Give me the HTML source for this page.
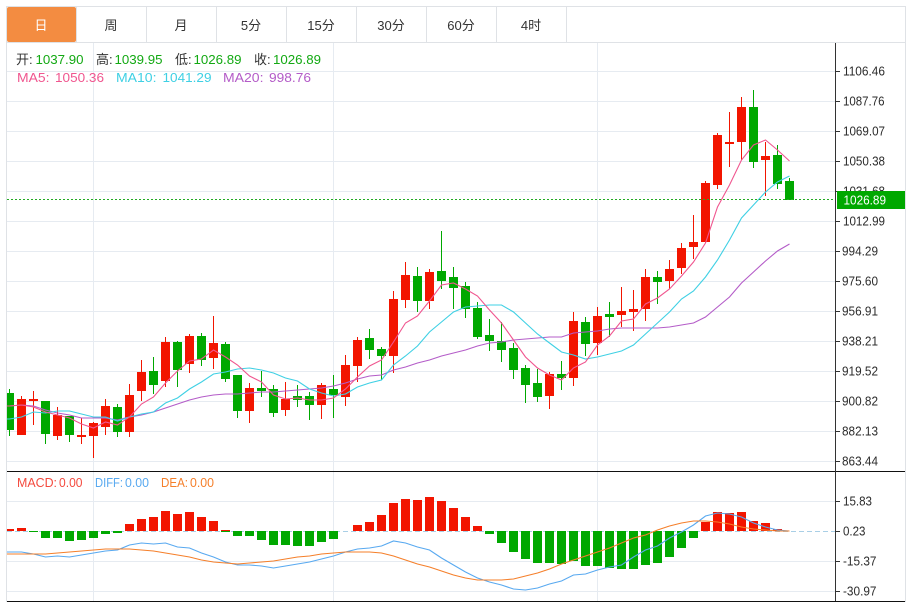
<!DOCTYPE html>
<html lang="zh">
<head>
<meta charset="utf-8">
<title>K线图</title>
<style>
html,body{margin:0;padding:0;background:#fff;width:912px;height:602px;overflow:hidden}
svg{display:block;font-family:"Liberation Sans","Noto Sans CJK SC",sans-serif}
.ax{font-size:12.5px;fill:#2b2b2b}
.hd{font-size:13px}
.tb{font-size:13px;fill:#333;text-anchor:middle}
.c{shape-rendering:crispEdges}
.l{fill:none;stroke-width:1.1}
</style>
</head>
<body>
<svg width="912" height="602" viewBox="0 0 912 602" xmlns="http://www.w3.org/2000/svg">
<!-- grid -->
<path class="c" fill="none" stroke="#e6ebf1" d="M7 71.5H835M7 101.5H835M7 131.5H835M7 161.5H835M7 191.5H835M7 221.5H835M7 251.5H835M7 281.5H835M7 311.5H835M7 341.5H835M7 371.5H835M7 401.5H835M7 431.5H835M7 461.5H835M7 501.5H835M7 561.5H835M7 591.5H835M93.5 43V601M333.5 43V601M597.5 43V601"/>
<!-- frame -->
<path class="c" fill="none" stroke="#dfe2e6" d="M6.5 6V602M6 6.5H906M905.5 6V602M6 42.5H906M146.5 7V42M216.5 7V42M286.5 7V42M356.5 7V42M426.5 7V42M496.5 7V42M566.5 7V42"/>
<rect x="7" y="7" width="69" height="35" rx="2" fill="#f38c41"/>
<path class="c" fill="none" stroke="#dfe2e6" d="M76.5 7V42"/>
<text class="tb" x="41" y="30" style="fill:#fff">日</text>
<text class="tb" x="111" y="30">周</text>
<text class="tb" x="181" y="30">月</text>
<text class="tb" x="251" y="30">5分</text>
<text class="tb" x="321" y="30">15分</text>
<text class="tb" x="391" y="30">30分</text>
<text class="tb" x="461" y="30">60分</text>
<text class="tb" x="531" y="30">4时</text>
<!-- wicks -->
<path class="c" fill="none" stroke="#f21500" d="M21.5 396V435M33.5 391V425M57.5 407V440M81.5 418V444M93.5 422V458M105.5 399V435M129.5 384V437M141.5 360V401M165.5 337V387M189.5 334V373M213.5 316V369M249.5 383V423M285.5 382V416M321.5 383V419M345.5 355V406M357.5 337V382M393.5 291V373M405.5 262V308M429.5 269V309M549.5 372V409M573.5 312V386M597.5 307V355M621.5 287V327M633.5 290V331M645.5 269V321M669.5 260V289M681.5 243V274M693.5 215V259M705.5 181V243M717.5 133V189M729.5 112V167M741.5 97V160M765.5 142V196"/>
<path class="c" fill="none" stroke="#00a800" d="M9.5 389V436M45.5 401V444M69.5 416V442M117.5 404V437M153.5 357V394M177.5 341V387M201.5 333V366M225.5 342V382M237.5 375V418M261.5 371V397M273.5 385V417M297.5 385V407M309.5 392V420M333.5 375V418M369.5 329V359M381.5 347V380M417.5 267V312M441.5 231V289M453.5 267V309M465.5 282V318M477.5 302V339M489.5 319V351M501.5 322V362M513.5 343V379M525.5 365V403M537.5 369V402M561.5 361V390M585.5 317V356M609.5 302V337M657.5 271V304M753.5 90V168M777.5 145V189M789.5 178V200"/>
<!-- bodies -->
<path class="c" fill="#f21500" d="M17 399h9v36h-9zM29 399h9v2h-9zM53 415h9v21h-9zM77 435h9v2h-9zM89 423h9v13h-9zM101 406h9v21h-9zM125 395h9v37h-9zM137 372h9v19h-9zM161 342h9v39h-9zM185 336h9v28h-9zM209 343h9v15h-9zM245 388h9v23h-9zM281 399h9v11h-9zM317 385h9v20h-9zM341 365h9v32h-9zM353 340h9v26h-9zM389 299h9v57h-9zM401 275h9v25h-9zM425 272h9v29h-9zM545 374h9v22h-9zM569 321h9v57h-9zM593 316h9v27h-9zM617 311h9v4h-9zM629 309h9v3h-9zM641 277h9v32h-9zM665 269h9v12h-9zM677 248h9v20h-9zM689 242h9v5h-9zM701 183h9v59h-9zM713 135h9v50h-9zM725 142h9v2h-9zM737 107h9v35h-9zM761 156h9v4h-9z"/>
<path class="c" fill="#00a800" d="M7 393h7v37h-7zM41 401h9v33h-9zM65 416h9v19h-9zM113 407h9v25h-9zM149 371h9v14h-9zM173 342h9v28h-9zM197 336h9v24h-9zM221 344h9v35h-9zM233 375h9v36h-9zM257 388h9v3h-9zM269 389h9v24h-9zM293 396h9v4h-9zM305 396h9v9h-9zM329 389h9v6h-9zM365 338h9v12h-9zM377 349h9v7h-9zM413 276h9v25h-9zM437 271h9v10h-9zM449 277h9v11h-9zM461 286h9v23h-9zM473 308h9v29h-9zM485 335h9v6h-9zM497 341h9v9h-9zM509 348h9v22h-9zM521 368h9v17h-9zM533 383h9v14h-9zM557 374h9v4h-9zM581 322h9v22h-9zM605 314h9v3h-9zM653 277h9v5h-9zM749 107h9v55h-9zM773 155h9v29h-9zM785 181h9v19h-9z"/>
<!-- MA lines -->
<polyline class="l" stroke="#b45cc8" points="7,406 9.5,406 21.5,405 33.5,406 45.5,410 57.5,413 69.5,415 81.5,418 93.5,418 105.5,418 117.5,420 129.5,417 141.5,415 153.5,412 165.5,408 177.5,404 189.5,400 201.5,397 213.5,395 225.5,394 237.5,394 249.5,393 261.5,392 273.5,392 285.5,391 297.5,390 309.5,389 321.5,388 333.5,386 345.5,383 357.5,379 369.5,376 381.5,375 393.5,370 405.5,367 417.5,363 429.5,360 441.5,356 453.5,353 465.5,350 477.5,346 489.5,343 501.5,342 513.5,340 525.5,339 537.5,338 549.5,337 561.5,337 573.5,333 585.5,332 597.5,331 609.5,329 621.5,328 633.5,328 645.5,328 657.5,328 669.5,327 681.5,325 693.5,323 705.5,317 717.5,307 729.5,297 741.5,283 753.5,272 765.5,261 777.5,251 789.5,244"/>
<polyline class="l" stroke="#3fd0e4" points="7,419 9.5,419 21.5,417 33.5,412 45.5,413 57.5,411 69.5,411 81.5,414 93.5,417 105.5,417 117.5,421 129.5,417 141.5,414 153.5,412 165.5,403 177.5,398 189.5,389 201.5,382 213.5,374 225.5,372 237.5,369 249.5,368 261.5,370 273.5,373 285.5,378 297.5,381 309.5,389 321.5,393 333.5,396 345.5,394 357.5,387 369.5,383 381.5,380 393.5,365 405.5,356 417.5,346 429.5,332 441.5,322 453.5,312 465.5,307 477.5,306 489.5,305 501.5,305 513.5,312 525.5,323 537.5,334 549.5,343 561.5,352 573.5,355 585.5,359 597.5,357 609.5,354 621.5,351 633.5,345 645.5,334 657.5,323 669.5,312 681.5,299 693.5,291 705.5,277 717.5,260 729.5,240 741.5,218 753.5,205 765.5,192 777.5,182 789.5,176"/>
<polyline class="l" stroke="#f0568f" points="7,406 9.5,406 21.5,405 33.5,407 45.5,412 57.5,415 69.5,418 81.5,424 93.5,428 105.5,422 117.5,425 129.5,417 141.5,404 153.5,397 165.5,383 177.5,371 189.5,361 201.5,359 213.5,350 225.5,357 237.5,365 249.5,376 261.5,382 273.5,395 285.5,399 297.5,398 309.5,400 321.5,400 333.5,398 345.5,389 357.5,377 369.5,366 381.5,360 393.5,342 405.5,323 417.5,316 429.5,301 441.5,285 453.5,283 465.5,289 477.5,296 489.5,310 501.5,323 513.5,340 525.5,357 537.5,368 549.5,375 561.5,380 573.5,368 585.5,362 597.5,345 609.5,336 621.5,321 633.5,319 645.5,304 657.5,298 669.5,289 681.5,276 693.5,262 705.5,243 717.5,207 729.5,185 741.5,160 753.5,145 765.5,140 777.5,150 789.5,161"/>
<!-- current price line -->
<path fill="none" stroke="#22ab22" stroke-dasharray="2 2" class="c" d="M7 199.5H835"/>
<!-- MACD -->
<path fill="none" stroke="#a9cfe6" stroke-dasharray="5 3" class="c" d="M7 531.5H835"/>
<path class="c" fill="#00a800" d="M29 531h9v1h-9zM41 531h9v7h-9zM53 531h9v7h-9zM65 531h9v10h-9zM77 531h9v9h-9zM89 531h9v7h-9zM101 531h9v3h-9zM113 531h9v2h-9zM221 531h9v1h-9zM233 531h9v5h-9zM245 531h9v5h-9zM257 531h9v9h-9zM269 531h9v14h-9zM281 531h9v14h-9zM293 531h9v15h-9zM305 531h9v15h-9zM317 531h9v11h-9zM329 531h9v8h-9zM485 531h9v3h-9zM497 531h9v12h-9zM509 531h9v21h-9zM521 531h9v28h-9zM533 531h9v32h-9zM545 531h9v32h-9zM557 531h9v33h-9zM569 531h9v30h-9zM581 531h9v35h-9zM593 531h9v35h-9zM605 531h9v37h-9zM617 531h9v38h-9zM629 531h9v38h-9zM641 531h9v34h-9zM653 531h9v32h-9zM665 531h9v26h-9zM677 531h9v17h-9zM689 531h9v7h-9z"/>
<path class="c" fill="#f21500" d="M7 529h7v2h-7zM17 528h9v3h-9zM125 524h9v7h-9zM137 519h9v12h-9zM149 517h9v14h-9zM161 511h9v20h-9zM173 514h9v17h-9zM185 512h9v19h-9zM197 517h9v14h-9zM209 521h9v10h-9zM221 530h9v1h-9zM353 525h9v6h-9zM365 522h9v9h-9zM377 515h9v16h-9zM389 503h9v28h-9zM401 499h9v32h-9zM413 500h9v31h-9zM425 497h9v34h-9zM437 501h9v30h-9zM449 508h9v23h-9zM461 517h9v14h-9zM473 526h9v5h-9zM701 522h9v9h-9zM713 512h9v19h-9zM725 513h9v18h-9zM737 512h9v19h-9zM749 521h9v10h-9zM761 523h9v8h-9zM773 529h9v2h-9z"/>
<polyline class="l" stroke="#58a9f0" points="7,552 9.5,552 21.5,552 33.5,554 45.5,557 57.5,556 69.5,557 81.5,555 93.5,553 105.5,551 117.5,550 129.5,545 141.5,543 153.5,544 165.5,543 177.5,547 189.5,548 201.5,553 213.5,557 225.5,562 237.5,565 249.5,565 261.5,566 273.5,568 285.5,566 297.5,564 309.5,562 321.5,559 333.5,556 345.5,552 357.5,549 369.5,548 381.5,546 393.5,541 405.5,543 417.5,547 429.5,550 441.5,558 453.5,565 465.5,572 477.5,578 489.5,582 501.5,585 513.5,589 525.5,590 537.5,588 549.5,584 561.5,581 573.5,575 585.5,574 597.5,570 609.5,567 621.5,565 633.5,557 645.5,550 657.5,546 669.5,538 681.5,532 693.5,525 705.5,516 717.5,513 729.5,514 741.5,517 753.5,523 765.5,527 777.5,530 789.5,531"/>
<polyline class="l" stroke="#f57f2a" points="7,554 9.5,554 21.5,554 33.5,554 45.5,554 57.5,553 69.5,552 81.5,551 93.5,550 105.5,549 117.5,549 129.5,549 141.5,550 153.5,551 165.5,553 177.5,555 189.5,557 201.5,560 213.5,562 225.5,563 237.5,564 249.5,563 261.5,562 273.5,561 285.5,559 297.5,557 309.5,556 321.5,554 333.5,553 345.5,552 357.5,552 369.5,552 381.5,553 393.5,556 405.5,560 417.5,564 429.5,567 441.5,571 453.5,575 465.5,578 477.5,580 489.5,580 501.5,580 513.5,579 525.5,576 537.5,573 549.5,569 561.5,564 573.5,560 585.5,556 597.5,552 609.5,548 621.5,543 633.5,538 645.5,535 657.5,530 669.5,526 681.5,523 693.5,521 705.5,521 717.5,522 729.5,524 741.5,527 753.5,529 765.5,530 777.5,531 789.5,531"/>
<!-- panel lines -->
<path class="c" fill="none" stroke="#111" d="M7 471.5H905M7 601.5H905"/>
<path class="c" fill="none" stroke="#333" d="M835.5 43V601M836 71.5h4M836 101.5h4M836 131.5h4M836 161.5h4M836 191.5h4M836 221.5h4M836 251.5h4M836 281.5h4M836 311.5h4M836 341.5h4M836 371.5h4M836 401.5h4M836 431.5h4M836 461.5h4M836 501.5h4M836 531.5h4M836 561.5h4M836 591.5h4"/>
<!-- axis labels -->
<g class="ax">
<text x="843" y="75.5" textLength="42" lengthAdjust="spacingAndGlyphs">1106.46</text>
<text x="843" y="105.5" textLength="41.5" lengthAdjust="spacingAndGlyphs">1087.76</text>
<text x="843" y="135.5" textLength="42" lengthAdjust="spacingAndGlyphs">1069.07</text>
<text x="843" y="165.5" textLength="42" lengthAdjust="spacingAndGlyphs">1050.38</text>
<text x="843" y="195.5" textLength="42" lengthAdjust="spacingAndGlyphs">1031.68</text>
<text x="843" y="225.5" textLength="42" lengthAdjust="spacingAndGlyphs">1012.99</text>
<text x="842" y="255.5" textLength="36" lengthAdjust="spacingAndGlyphs">994.29</text>
<text x="842" y="285.5" textLength="36" lengthAdjust="spacingAndGlyphs">975.60</text>
<text x="842" y="315.5" textLength="36" lengthAdjust="spacingAndGlyphs">956.91</text>
<text x="842" y="345.5" textLength="36" lengthAdjust="spacingAndGlyphs">938.21</text>
<text x="842" y="375.5" textLength="36" lengthAdjust="spacingAndGlyphs">919.52</text>
<text x="842" y="405.5" textLength="36" lengthAdjust="spacingAndGlyphs">900.82</text>
<text x="842" y="435.5" textLength="36" lengthAdjust="spacingAndGlyphs">882.13</text>
<text x="842" y="465.5" textLength="36" lengthAdjust="spacingAndGlyphs">863.44</text>
<text x="843" y="505.5" textLength="29" lengthAdjust="spacingAndGlyphs">15.83</text>
<text x="843" y="535.5" textLength="22.5" lengthAdjust="spacingAndGlyphs">0.23</text>
<text x="843" y="565.5" textLength="33.5" lengthAdjust="spacingAndGlyphs">-15.37</text>
<text x="843" y="595.5" textLength="33.5" lengthAdjust="spacingAndGlyphs">-30.97</text>
</g>
<rect class="c" x="837" y="191" width="68" height="18" fill="#00a800"/>
<text x="843.5" y="204.5" font-size="13" fill="#fff" textLength="42.5" lengthAdjust="spacingAndGlyphs">1026.89</text>
<!-- header -->
<g class="hd">
<text x="16" y="64" fill="#333">开:</text>
<text x="35.5" y="64" fill="#13a913" textLength="48" lengthAdjust="spacingAndGlyphs">1037.90</text>
<text x="96" y="64" fill="#333">高:</text>
<text x="114.5" y="64" fill="#13a913" textLength="48" lengthAdjust="spacingAndGlyphs">1039.95</text>
<text x="175" y="64" fill="#333">低:</text>
<text x="193.5" y="64" fill="#13a913" textLength="48" lengthAdjust="spacingAndGlyphs">1026.89</text>
<text x="254" y="64" fill="#333">收:</text>
<text x="273" y="64" fill="#13a913" textLength="48" lengthAdjust="spacingAndGlyphs">1026.89</text>
<text x="17" y="82" fill="#f0568f" textLength="32.5" lengthAdjust="spacingAndGlyphs">MA5:</text>
<text x="55" y="82" fill="#f0568f" textLength="49" lengthAdjust="spacingAndGlyphs">1050.36</text>
<text x="116" y="82" fill="#3fd0e4" textLength="40.5" lengthAdjust="spacingAndGlyphs">MA10:</text>
<text x="162.5" y="82" fill="#3fd0e4" textLength="49" lengthAdjust="spacingAndGlyphs">1041.29</text>
<text x="223" y="82" fill="#b45cc8" textLength="40.5" lengthAdjust="spacingAndGlyphs">MA20:</text>
<text x="269" y="82" fill="#b45cc8" textLength="42" lengthAdjust="spacingAndGlyphs">998.76</text>
<text x="17" y="487" fill="#f44a3e" textLength="40" lengthAdjust="spacingAndGlyphs">MACD:</text>
<text x="59" y="487" fill="#f44a3e" textLength="23.5" lengthAdjust="spacingAndGlyphs">0.00</text>
<text x="95" y="487" fill="#58a9f0" textLength="28" lengthAdjust="spacingAndGlyphs">DIFF:</text>
<text x="125" y="487" fill="#58a9f0" textLength="24" lengthAdjust="spacingAndGlyphs">0.00</text>
<text x="161" y="487" fill="#f57f2a" textLength="27" lengthAdjust="spacingAndGlyphs">DEA:</text>
<text x="190" y="487" fill="#f57f2a" textLength="24" lengthAdjust="spacingAndGlyphs">0.00</text>
</g>
</svg>
</body>
</html>
